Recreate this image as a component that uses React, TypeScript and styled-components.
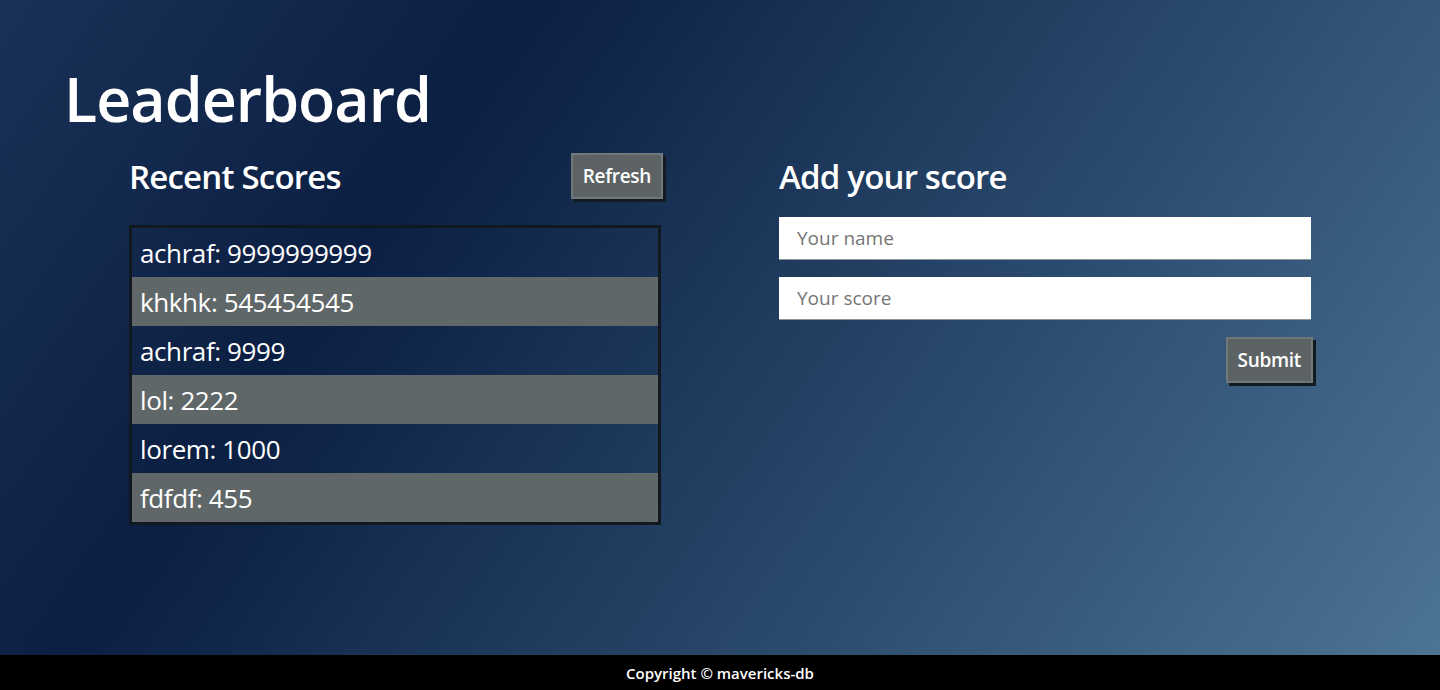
import styled, { createGlobalStyle } from 'styled-components';

const GlobalStyle = createGlobalStyle`
  html, body {
    margin: 0;
    padding: 0;
    height: 100%;
  }

  body {
    font-family: 'Open Sans', 'Noto Sans', sans-serif;
    color: #fff;
  }

  #root {
    min-height: 100vh;
    display: flex;
    flex-direction: column;
  }
`;

const StyledPage = styled.div`
  flex: 1;
  display: flex;
  flex-direction: column;
  background: linear-gradient(125deg, #1a3157 0%, #0b1f42 28%, #2a4a6d 65%, #4c7494 100%);
  padding: 62px 0 0 64px;

  .title {
    margin: 0;
    font-size: 61px;
    font-weight: 600;
    letter-spacing: -1px;
    line-height: 1.2;
  }
`;

const StyledColumns = styled.div`
  display: grid;
  grid-template-columns: 534px 534px;
  column-gap: 116px;
  padding-left: 65px;
  margin-top: 18px;
`;

const ColumnHead = styled.div`
  display: flex;
  justify-content: space-between;
  align-items: center;
  height: 46px;

  h2 {
    margin: 0;
    font-size: 33px;
    font-weight: 600;
    letter-spacing: -0.8px;
  }
`;

const GrayButton = styled.button`
  font-family: inherit;
  font-size: 19px;
  font-weight: 600;
  color: #fff;
  background-color: #5d6364;
  border: 2px solid #70787a;
  box-shadow: 3px 3px 0px 0px #141a22;
  padding: 8px 10px;
  letter-spacing: -0.3px;
  cursor: pointer;
`;

const ScoreList = styled.ul`
  list-style: none;
  margin: 26px 0 0;
  padding: 0;
  width: 526px;
  border: 3px solid #111820;
`;

const ScoreRow = styled.li<{ $striped: boolean }>`
  height: 49px;
  display: flex;
  align-items: center;
  padding-left: 8px;
  font-size: 26px;
  font-weight: 500;
  letter-spacing: -0.4px;
  background-color: ${({ $striped }) => ($striped ? '#606769' : 'transparent')};
`;

const Form = styled.form`
  display: flex;
  flex-direction: column;
  gap: 17px;
  margin-top: 18px;
`;

const TextInput = styled.input`
  height: 43px;
  box-sizing: border-box;
  width: 532px;
  border: none;
  border-bottom: 1px solid #8a949c;
  padding: 0 18px;
  font-family: inherit;
  font-size: 19px;
  color: #333;

  &::placeholder {
    color: #757575;
  }
`;

const SubmitRow = styled.div`
  display: flex;
  justify-content: flex-end;
  width: 534px;
`;

const Footer = styled.footer`
  height: 35px;
  background-color: #000;
  display: flex;
  align-items: center;
  justify-content: center;
  font-size: 15px;
  font-weight: 600;
`;

const scores = [
  { name: 'achraf', score: 9999999999 },
  { name: 'khkhk', score: 545454545 },
  { name: 'achraf', score: 9999 },
  { name: 'lol', score: 2222 },
  { name: 'lorem', score: 1000 },
  { name: 'fdfdf', score: 455 }
];

const App = () => {
  return (
    <>
      <GlobalStyle />
      <StyledPage>
        <h1 className='title'>Leaderboard</h1>
        <StyledColumns>
          <section>
            <ColumnHead>
              <h2>Recent Scores</h2>
              <GrayButton type='button'>Refresh</GrayButton>
            </ColumnHead>
            <ScoreList>
              {scores.map(({ name, score }, i) => (
                <ScoreRow key={`${name}-${i}`} $striped={i % 2 === 1}>
                  {name}: {score}
                </ScoreRow>
              ))}
            </ScoreList>
          </section>
          <section>
            <ColumnHead>
              <h2>Add your score</h2>
            </ColumnHead>
            <Form onSubmit={e => e.preventDefault()}>
              <TextInput type='text' placeholder='Your name' />
              <TextInput type='text' placeholder='Your score' />
              <SubmitRow>
                <GrayButton type='submit'>Submit</GrayButton>
              </SubmitRow>
            </Form>
          </section>
        </StyledColumns>
      </StyledPage>
      <Footer>Copyright © mavericks-db</Footer>
    </>
  );
};

export default App;
